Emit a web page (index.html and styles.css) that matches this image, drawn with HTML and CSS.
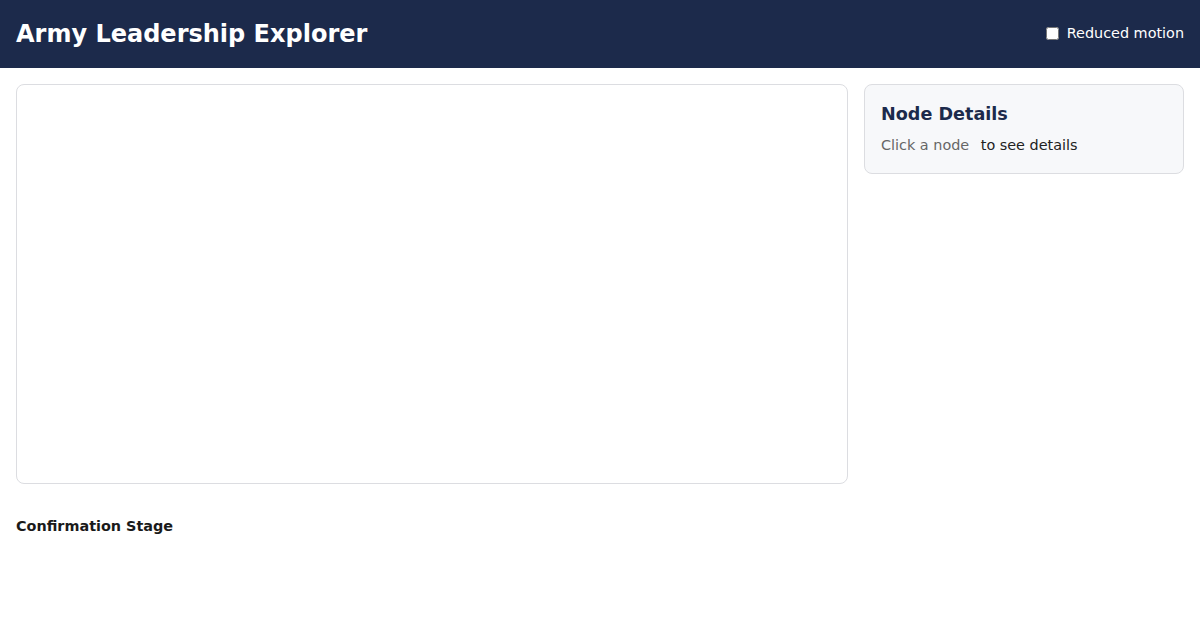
FILE: index.html
```html
<!DOCTYPE html>
<html lang="en">
<head>
<meta charset="utf-8">
<title>Army Leadership Explorer</title>
<link rel="stylesheet" href="styles.css">
</head>
<body>
<header class="topbar">
  <h1 class="title">Army Leadership Explorer</h1>
  <label class="motion"><input type="checkbox" class="motion-box"> Reduced motion</label>
</header>
<main class="layout">
  <div class="canvas"></div>
  <aside class="details">
    <h2 class="details-title">Node Details</h2>
    <p class="details-text"><span class="muted">Click a node</span> <span class="strong">to see details</span></p>
  </aside>
</main>
<section class="stage">
  <h3 class="stage-title">Confirmation Stage</h3>
</section>
</body>
</html>
```
FILE: styles.css
```css
* { box-sizing: border-box; }
body {
  margin: 0;
  font-family: "DejaVu Sans", sans-serif;
  background: #ffffff;
  color: #222;
}
.topbar {
  height: 68px;
  background: #1c2a4b;
  display: flex;
  align-items: center;
  justify-content: space-between;
  padding: 0 16px;
}
.title {
  margin: 0;
  color: #fff;
  font-size: 24px;
  font-weight: bold;
}
.motion {
  color: #fff;
  font-size: 14.4px;
  display: flex;
  align-items: center;
  gap: 8px;
  margin-top: -2px;
}
.motion-box {
  margin: 0;
  width: 13px;
  height: 13px;
}
.layout {
  display: grid;
  grid-template-columns: 1fr 320px;
  gap: 16px;
  padding: 16px;
  align-items: start;
}
.canvas {
  height: 400px;
  border: 1px solid #dcdde1;
  border-radius: 8px;
  background: #fff;
}
.details {
  background: #f7f8fa;
  border: 1px solid #dcdde1;
  border-radius: 8px;
  padding: 19px 16px 16px;
  height: 90px;
}
.details-title {
  margin: 0 0 10px;
  font-size: 17.6px;
  color: #1c2a4b;
  line-height: 1.2;
}
.details-text {
  margin: 0;
  font-size: 14.4px;
  line-height: 1.5;
}
.muted { color: #666; margin-right: 7px; }
.strong { color: #222; }
.stage {
  padding: 18px 16px 0;
}
.stage-title {
  margin: 0;
  font-size: 14.4px;
  font-weight: bold;
  color: #1a1a1a;
}
```
